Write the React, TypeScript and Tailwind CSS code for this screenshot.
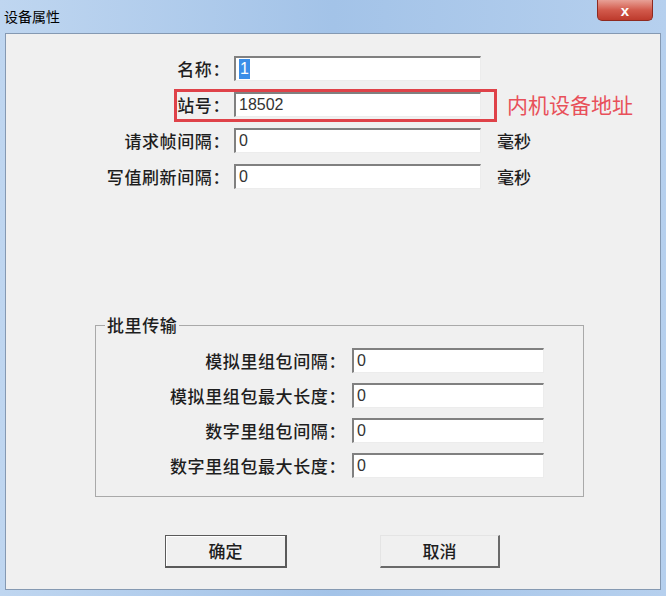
import React from 'react'

const cjk = { fontFamily: '"Noto Sans CJK SC", "Noto Sans", sans-serif' }
const latin = { fontFamily: '"Liberation Sans", Arial, sans-serif' }

const inputCls =
  'h-[25px] bg-white border-t-2 border-l-2 border-t-[#808080] border-l-[#808080] border-r border-b border-r-[#ececec] border-b-[#ececec] flex items-center pl-[3px] text-[16px] text-[#333]'

const Field = ({ value, selected }: { value: string; selected?: boolean }) => (
  <div className={`${inputCls} w-[247px]`} style={latin}>
    {selected ? (
      <span className="bg-[#3b8ee8] text-white px-[1px] leading-[20px]">{value}</span>
    ) : (
      value
    )}
  </div>
)

const topRows = [
  { label: '名称：', value: '1', selected: true },
  { label: '站号：', value: '18502', note: '内机设备地址' },
  { label: '请求帧间隔：', value: '0', unit: '毫秒' },
  { label: '写值刷新间隔：', value: '0', unit: '毫秒' }
]

const groupRows = ['模拟里组包间隔：', '模拟里组包最大长度：', '数字里组包间隔：', '数字里组包最大长度：']

export default function App() {
  return (
    <div className="w-[666px] h-[596px] flex flex-col bg-gradient-to-r from-[#bfd6f0] via-[#a3c3e8] to-[#b6d0ee] overflow-hidden">
      {/* title bar */}
      <div className="h-[33px] flex items-start justify-between">
        <div className="pl-[4px] pt-[6px] text-[14px] text-black leading-[20px]" style={cjk}>
          设备属性
        </div>
        <div className="mr-[13px] w-[56px] h-[21px] rounded-b-[5px] border border-t-0 border-[#8e2a20] bg-gradient-to-b from-[#e7a096] via-[#d25a4c] to-[#bd3a2c] flex items-center justify-center">
          <span className="text-white font-bold text-[15px] leading-none" style={latin}>x</span>
        </div>
      </div>

      {/* client area */}
      <div className="relative mx-[5px] mb-[6px] flex-1 bg-[#f0f0f0] border border-[#8599b2]" style={cjk}>
        <div className="pt-[22px] flex flex-col gap-[11px]">
          {topRows.map((r) => (
            <div key={r.label} className="flex items-center h-[25px]">
              <div className="w-[224px] text-right text-[17px] tracking-[0.6px] text-[#1e1e1e] font-medium leading-none">{r.label}</div>
              <div className="ml-[4px]">
                <Field value={r.value} selected={r.selected} />
              </div>
              {r.unit && (
                <div className="ml-[16px] text-[17px] text-[#1e1e1e] font-medium leading-none">{r.unit}</div>
              )}
              {r.note && (
                <div className="ml-[26px] text-[21px] text-[#e8505a] leading-none">{r.note}</div>
              )}
            </div>
          ))}
        </div>

        {/* annotation box */}
        <div className="absolute left-[168px] top-[55px] w-[323px] h-[33px] border-[3px] border-[#df4249]" />

        <fieldset className="ml-[89px] mt-[124px] w-[489px] border border-[#a9a9a9] pb-[18px] pt-[11px]">
          <legend className="ml-[9px] px-[2px] text-[17px] tracking-[0.6px] text-[#1e1e1e] font-medium leading-[24px]">批里传输</legend>
          <div className="flex flex-col gap-[10px]">
            {groupRows.map((l) => (
              <div key={l} className="flex items-center h-[25px]">
                <div className="w-[250px] text-right text-[17px] tracking-[0.6px] text-[#1e1e1e] font-medium leading-none">{l}</div>
                <div className={`${inputCls} ml-[6px] w-[192px]`} style={latin}>0</div>
              </div>
            ))}
          </div>
        </fieldset>

        <div className="flex mt-[38px] ml-[159px]">
          <button className="w-[122px] h-[33px] bg-[#f0f0f0] border border-[#5a5a5a] border-b-2 border-r-2 shadow-[inset_1px_1px_0_#ffffff] text-[17px] text-[#1e1e1e] font-medium">
            确定
          </button>
          <button className="ml-[93px] w-[120px] h-[33px] bg-[#f0f0f0] border-t border-l border-t-[#e4e4e4] border-l-[#e4e4e4] border-b-2 border-r-2 border-b-[#6a6a6a] border-r-[#6a6a6a] text-[17px] text-[#1e1e1e] font-medium">
            取消
          </button>
        </div>
      </div>
    </div>
  )
}
